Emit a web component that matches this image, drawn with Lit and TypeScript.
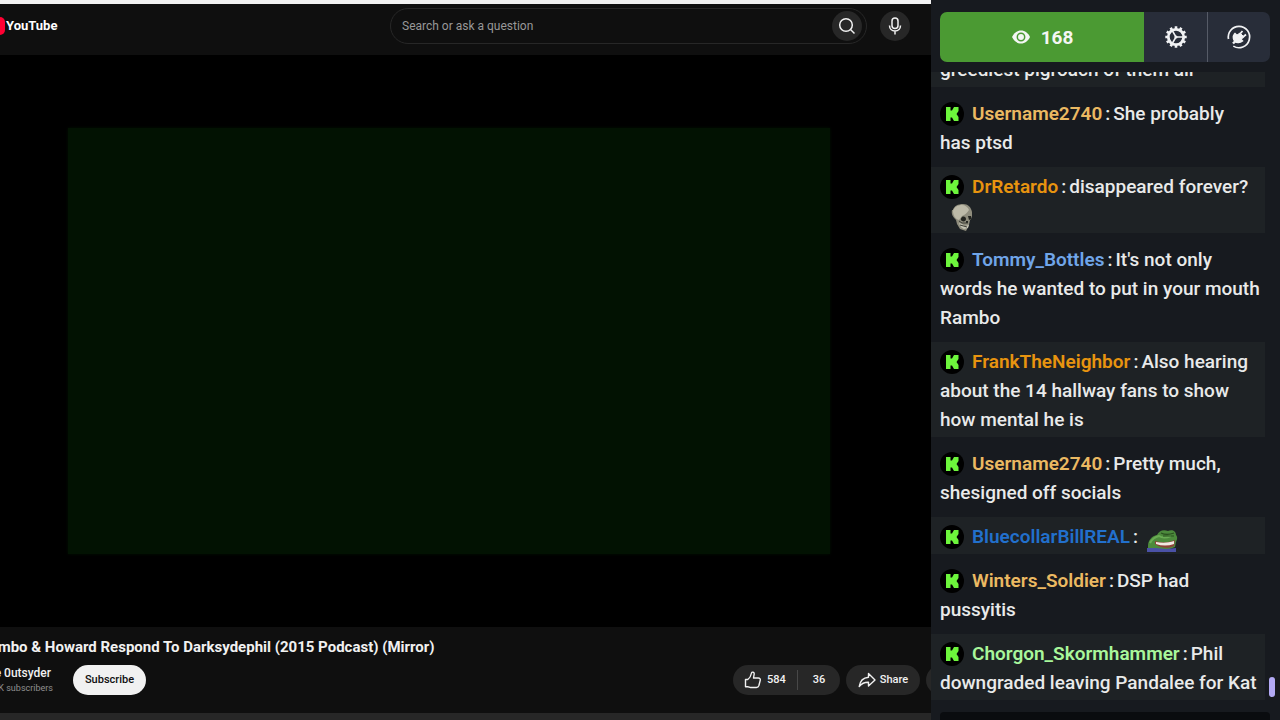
import { LitElement, html, css, svg, nothing } from "lit";
import { customElement, property } from "lit/decorators.js";

type Emote = "skull" | "frog";

interface Message {
  user?: string;
  tone?: string;
  text: string;
  emote?: Emote;
}

const MESSAGES: Message[] = [
  { user: "Winters_Soldier", tone: "sand", text: "Kat is the greediest pigroach of them all" },
  { user: "Username2740", tone: "sand", text: "She probably has\u00a0ptsd" },
  { user: "DrRetardo", tone: "orange", text: "disappeared forever?", emote: "skull" },
  { user: "Tommy_Bottles", tone: "sky", text: "It's not only words he wanted to put in your mouth Rambo" },
  { user: "FrankTheNeighbor", tone: "orange", text: "Also hearing about the 14 hallway fans to show how mental he is" },
  { user: "Username2740", tone: "sand", text: "Pretty much, shesigned off socials" },
  { user: "BluecollarBillREAL", tone: "blue", text: "", emote: "frog" },
  { user: "Winters_Soldier", tone: "sand", text: "DSP had pussyitis" },
  { user: "Chorgon_Skormhammer", tone: "mint", text: "Phil downgraded leaving Pandalee for Kat" },
];

const skull = html`<svg class="emote" viewBox="0 0 32 30" role="img" aria-label="skull">
  <path d="M13 7C14 3 18 1 23 1c5 0 8 3 9 8l0 4-1 3-1 1-1 5-3 6-6-2-3-5-1-4c-3-3-5-6-4-10z" fill="#8f8d7d" />
  <path d="M13 8c1-4 5-6 9-6 3 0 6 2 7 5-2 3-4 5-7 6l-3 4c-4-1-6-5-6-9z" fill="#bdbaa8" />
  <path d="M22 14c2-1 4 0 4 2s-2 3-4 2-1-3 0-4zM28 13l3 0v3l-2 1zM26 18l2 0 0 2-2 0z" fill="#23241f" />
  <path d="M19 20c1 3 2 5 5 6l4-1 1-3-4 1-3-2z" fill="#c4c2b2" />
  <path d="M20 22l7 2M19 18l3 2 6 0" stroke="#3b3b33" stroke-width="1" fill="none" />
</svg>`;

const frog = html`<svg class="emote" viewBox="0 0 32 30" role="img" aria-label="laughing frog">
  <path d="M2 22c0-6 4-10 9-11 2-4 6-6 11-4 4-2 8 0 8 4 2 2 1 5 0 7l-1 5-8 3H2z" fill="#4c8a3c" />
  <path d="M4 19c2-4 5-6 9-7 3 2 7 2 12 0" stroke="#6aac54" stroke-width="2" fill="none" />
  <path d="M15 9c4 2 8 2 13 0M17 12l11 0" stroke="#29501f" stroke-width="1.200" fill="none" />
  <path d="M9 17c6 2 13 2 20-1l-1 6c-6 3-14 2-19-2z" fill="#8d4238" />
  <path d="M10 18c6 1 12 1 18-1v3c-6 2-12 2-18 0z" fill="#f0e9e2" />
  <path d="M1 24l9 0 10 1 10-1v4H1z" fill="#4a51a6" />
</svg>`;

@customElement("chat-message")
export class ChatMessage extends LitElement {
  @property({ attribute: false }) message!: Message;

  static styles = css`
    :host {
      display: block;
      padding: 5px 4px 3px 9px;
      font-size: 19px;
      line-height: 29px;
      font-weight: 500;
      color: #e9eaea;
      overflow-wrap: break-word;
    }
    .badge {
      width: 24px;
      height: 24px;
      vertical-align: -6px;
      margin-right: 8px;
    }
    .name {
      margin-right: 3px;
      font-weight: 600;
    }
    .colon { margin-right: 3px; }
    .sand { color: #ebb962; }
    .orange { color: #e8940f; }
    .sky { color: #70a5e8; }
    .blue { color: #2270cc; }
    .mint { color: #a9f79b; }
    .emote {
      width: 32px;
      height: 30px;
      margin: -4px 0;
      vertical-align: -7px;
    }
  `;

  render() {
    const m = this.message;
    return html`<svg class="badge" viewBox="0 0 24 24" aria-hidden="true">
        <circle cx="12" cy="12" r="12" fill="#000" />
        <path d="M6 5h4.500v3.500H12L14 5h4.500v4l-2 3 2 3v4H14l-2-3.500h-1.500V19H6z" fill="#6df53c" /></svg
      ><span class="name ${m.tone}">${m.user}</span><span class="colon">:</span>${m.text}
      ${m.emote === "skull" ? skull : m.emote === "frog" ? frog : nothing}`;
  }
}

@customElement("live-chat")
export class LiveChat extends LitElement {
  static styles = css`
    :host {
      display: flex;
      flex-direction: column;
      min-height: 0;
      overflow: hidden;
      background: #171a1f;
    }
    .bar {
      display: flex;
      flex: none;
      height: 50px;
      margin: 12px 10px 10px 9px;
      border-radius: 7px;
      overflow: hidden;
    }
    button {
      display: flex;
      align-items: center;
      justify-content: center;
      padding: 0;
      border: 0;
      color: #f4f6f4;
      background: #282d39;
      font: inherit;
    }
    .viewers {
      flex: 1;
      gap: 10px;
      background: #4b9a33;
      font-size: 19px;
      font-weight: 700;
    }
    .tool { width: 63px; }
    .tool + .tool { border-left: 1px solid #565b67; }
    .feed {
      display: flex;
      flex: 1;
      min-height: 0;
      overflow: hidden;
    }
    .list {
      display: flex;
      flex: 1;
      flex-direction: column;
      justify-content: flex-end;
      gap: 7px;
      min-width: 0;
    }
    .odd { background: #1e2225; }
    .track {
      display: flex;
      flex: none;
      flex-direction: column;
      justify-content: flex-end;
      width: 15px;
      padding: 0 0 3px 4px;
      box-sizing: border-box;
    }
    .thumb {
      width: 6px;
      height: 20px;
      border-radius: 3px;
      background: #b3aaf5;
    }
    .composer {
      flex: none;
      height: 8px;
      margin: 12px 10px 0 9px;
      border-radius: 4px 4px 0 0;
      background: #0a0c0f;
    }
  `;

  render() {
    return html`
      <div class="bar">
        <button class="viewers" aria-label="168 viewers">
          <svg width="20" height="16" viewBox="0 0 20 16" aria-hidden="true">
            <path d="M1 8C3 4 6 1.500 10 1.500S17 4 19 8c-2 4-5 6.500-9 6.500S3 12 1 8z" fill="#f4f6f4" />
            <circle cx="10" cy="8" r="3.700" fill="none" stroke="#4b9a33" stroke-width="1.500" />
          </svg>
          <span>168</span>
        </button>
        <button class="tool" aria-label="Settings">
          <svg width="24" height="24" viewBox="0 0 24 24" fill="none" stroke="#f1f2f4" aria-hidden="true">
            <circle cx="12" cy="12" r="7.700" stroke-width="2.800" />
            ${Array.from({ length: 12 }, (_, i) => svg`<path d="M12 1.300v3" stroke-width="2.600" transform="rotate(${i * 30} 12 12)" />`)}
            <path d="M12 12h7M12 12L8.500 6M12 12l-3.500 6" stroke-width="1.500" />
            <circle cx="12" cy="12" r="1.600" fill="#f1f2f4" stroke="none" />
          </svg>
        </button>
        <button class="tool" aria-label="Connections">
          <svg width="26" height="26" viewBox="0 0 26 26" fill="none" stroke="#f1f2f4" aria-hidden="true">
            <path d="M2.500 15A10.700 10.700 0 0 1 13 2.300a10.700 10.700 0 1 1-5.700 19.800" stroke-width="1.700" />
            <path d="M7 19.500l3-3" stroke-width="2.400" />
            <path d="M9 9.500l7.500 7.500c-2.500 2-6 2-7.500.500s-2.500-5-.500-7.500z" fill="#f1f2f4" stroke-width="1.500" />
            <path d="M11 11l3-2 3.500 3.500-2 3z" fill="#f1f2f4" />
            <path d="M13.500 10.500l3-3.500M16.500 13.500l3.500-3" stroke-width="1.800" />
          </svg>
        </button>
      </div>
      <div class="feed">
        <div class="list" role="log" aria-label="Chat messages">
          ${MESSAGES.map((m, i) => html`<chat-message class=${i % 2 ? "even" : "odd"} .message=${m}></chat-message>`)}
        </div>
        <div class="track"><div class="thumb"></div></div>
      </div>
      <div class="composer"></div>
    `;
  }
}

@customElement("watch-page")
export class WatchPage extends LitElement {
  static styles = css`
    :host {
      display: flex;
      flex-direction: column;
      min-width: 0;
      overflow: hidden;
      background: #0f0f0f;
      color: #f1f1f1;
    }
    .strip {
      flex: none;
      height: 4px;
      background: #f1f1f1;
    }
    .masthead {
      display: grid;
      flex: none;
      grid-template-columns: 390px 1fr 64px;
      align-items: center;
      height: 51px;
      padding-bottom: 8px;
      box-sizing: border-box;
    }
    .logo {
      display: flex;
      align-items: center;
      gap: 1px;
      margin-left: -20px;
      color: #fff;
      font: 700 13px/20px "Roboto", sans-serif;
      text-decoration: none;
    }
    .search {
      display: flex;
      align-items: center;
      height: 36px;
      padding: 0 4px 0 11px;
      border: 1px solid #272727;
      border-radius: 18px;
      box-sizing: border-box;
    }
    .search input {
      flex: 1;
      min-width: 0;
      padding: 0;
      border: 0;
      outline: 0;
      background: none;
      color: #f1f1f1;
      font: 400 12px/20px "Roboto", sans-serif;
    }
    .search input::placeholder {
      color: #989898;
      opacity: 1;
    }
    button {
      display: flex;
      align-items: center;
      justify-content: center;
      padding: 0;
      border: 0;
      background: #272727;
      color: #f1f1f1;
      font: 500 11px/16px "Roboto", sans-serif;
    }
    .round {
      width: 30px;
      height: 30px;
      border-radius: 50%;
    }
    .mic { margin-left: 13px; }
    .stage {
      display: flex;
      flex: 1;
      min-height: 0;
      padding: 73px 101px 73px 68px;
      background: #000;
    }
    .frame {
      flex: 1;
      background: #021202;
      box-shadow: 0 0 3px #021202;
    }
    .details { flex: none; }
    h1 {
      margin: 9px 0 7px -20px;
      font-size: 15px;
      line-height: 22px;
      font-weight: 700;
      white-space: nowrap;
    }
    .row {
      display: flex;
      align-items: center;
      height: 30px;
    }
    .owner {
      display: flex;
      flex-direction: column;
      align-items: flex-end;
      width: 53px;
      margin-right: 20px;
      white-space: nowrap;
    }
    .channel {
      padding-right: 2px;
      color: #f1f1f1;
      font-size: 12px;
      line-height: 17px;
      font-weight: 500;
      text-decoration: none;
    }
    .subs {
      color: #8f8f8f;
      font-size: 9px;
      line-height: 13px;
    }
    .pill {
      height: 30px;
      border-radius: 15px;
    }
    .subscribe {
      width: 73px;
      background: #f1f1f1;
      color: #0f0f0f;
    }
    .actions {
      display: flex;
      flex: none;
      gap: 6px;
      margin-left: auto;
      margin-right: -25px;
    }
    .votes {
      display: flex;
      overflow: hidden;
    }
    .votes button { height: 30px; }
    .like {
      width: 64px;
      gap: 5px;
    }
    .dislike { width: 43px; }
    .dislike span {
      flex: 1;
      border-left: 1px solid #484848;
      line-height: 20px;
    }
    .share {
      width: 74px;
      gap: 4px;
    }
    .more { width: 30px; }
    .about {
      height: 7px;
      margin-top: 18px;
      background: #272727;
    }
  `;

  render() {
    return html`
      <div class="strip"></div>
      <header class="masthead">
        <a class="logo" href="#" aria-label="YouTube">
          <svg width="25" height="18" viewBox="0 0 25 18" aria-hidden="true">
            <rect width="25" height="18" rx="5" fill="#f03" />
            <path d="M10 5l7 4-7 4z" fill="#fff" />
          </svg>
          <span>YouTube</span>
        </a>
        <form class="search" @submit=${(e: Event) => e.preventDefault()}>
          <input type="text" aria-label="Search" placeholder="Search or ask a question" />
          <button class="round" aria-label="Search">
            <svg width="18" height="18" viewBox="0 0 18 18" fill="none" stroke="#f1f1f1" stroke-width="1.500" aria-hidden="true">
              <circle cx="8" cy="8" r="6.300" />
              <path d="M12.500 12.500l4 4" />
            </svg>
          </button>
        </form>
        <button class="round mic" aria-label="Search with your voice">
          <svg width="14" height="18" viewBox="0 0 14 18" fill="none" stroke="#f1f1f1" stroke-width="1.500" aria-hidden="true">
            <rect x="4" y="1" width="6" height="10.500" rx="3" />
            <path d="M1.500 8.500c0 3.300 2.300 5.500 5.500 5.500s5.500-2.200 5.500-5.500M7 14v3.500" />
          </svg>
        </button>
      </header>
      <div class="stage"><div class="frame"></div></div>
      <section class="details">
        <h1>Rambo &amp; Howard Respond To Darksydephil (2015 Podcast) (Mirror)</h1>
        <div class="row">
          <div class="owner">
            <a class="channel" href="#">The 0utsyder</a>
            <span class="subs">K subscribers</span>
          </div>
          <button class="pill subscribe">Subscribe</button>
          <div class="actions">
            <div class="votes pill">
              <button class="like" aria-label="Like, 584">
                <svg width="18" height="18" viewBox="0 0 18 18" fill="none" stroke="#f1f1f1" stroke-width="1.400" stroke-linejoin="round" aria-hidden="true">
                  <path d="M1.500 8.500h2.300c1.700-1.300 3.200-3.700 3.700-6.500C8 .500 10.300 1 10.200 3L9.500 7h4.700c1.600 0 2.400 1 2 2.500l-1.300 5c-.400 1.300-1.200 2-2.500 2H6.500c-1 0-1.500-.800-2.700-.800H1.500z" />
                </svg>
                <span>584</span>
              </button>
              <button class="dislike" aria-label="Dislike, 36"><span>36</span></button>
            </div>
            <button class="pill share">
              <svg width="18" height="18" viewBox="0 0 18 18" fill="none" stroke="#f1f1f1" stroke-width="1.400" stroke-linejoin="round" aria-hidden="true">
                <path d="M10.500 2.500L17 9l-6.500 6v-3.700C6.500 11.200 3.700 12.500 1.200 15.500 2 10 5 6.700 10.500 6.200z" />
              </svg>
              <span>Share</span>
            </button>
            <button class="pill more" aria-label="More actions"></button>
          </div>
        </div>
        <div class="about"></div>
      </section>
    `;
  }
}

@customElement("app-root")
export class AppRoot extends LitElement {
  static styles = css`
    :host {
      display: grid;
      grid-template-columns: minmax(0, 1fr) 349px;
      grid-template-rows: minmax(0, 1fr);
      height: 100vh;
      overflow: hidden;
      background: #0f0f0f;
      font-family: "Roboto", sans-serif;
    }
  `;

  render() {
    return html`<watch-page></watch-page><live-chat></live-chat>`;
  }
}
